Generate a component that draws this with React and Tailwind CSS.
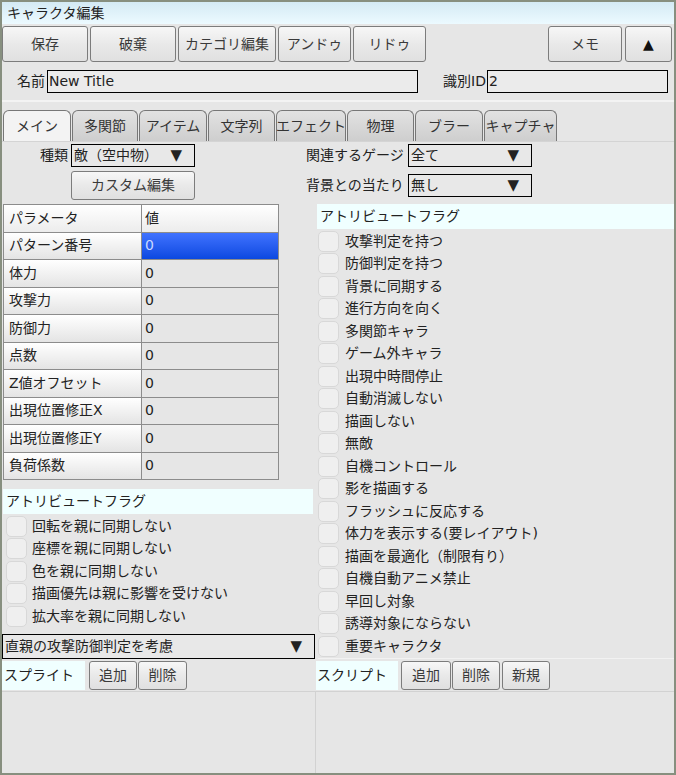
import React from "react";

const params = ["パターン番号", "体力", "攻撃力", "防御力", "点数", "Z値オフセット", "出現位置修正X", "出現位置修正Y", "負荷係数"];

const childFlags = ["回転を親に同期しない", "座標を親に同期しない", "色を親に同期しない", "描画優先は親に影響を受けない", "拡大率を親に同期しない"];

const attrFlags = [
  "攻撃判定を持つ",
  "防御判定を持つ",
  "背景に同期する",
  "進行方向を向く",
  "多関節キャラ",
  "ゲーム外キャラ",
  "出現中時間停止",
  "自動消滅しない",
  "描画しない",
  "無敵",
  "自機コントロール",
  "影を描画する",
  "フラッシュに反応する",
  "体力を表示する(要レイアウト)",
  "描画を最適化（制限有り）",
  "自機自動アニメ禁止",
  "早回し対象",
  "誘導対象にならない",
  "重要キャラクタ",
];

const tabs = [
  { label: "メイン", w: "w-[68px]", active: true },
  { label: "多関節", w: "w-[66px]" },
  { label: "アイテム", w: "w-[68px]" },
  { label: "文字列", w: "w-[67px]" },
  { label: "エフェクト", w: "w-[70px]" },
  { label: "物理", w: "w-[67px]" },
  { label: "ブラー", w: "w-[68px]" },
  { label: "キャプチャ", w: "w-[73px]" },
];

function Btn({ children, className = "" }) {
  return (
    <button
      type="button"
      className={`flex shrink-0 items-center justify-center rounded-[3px] border border-[#7c7c7c] bg-gradient-to-b from-[#f7f7f7] via-[#e9e9e9] to-[#e0e0e0] text-[14px] text-[#3a3a3a] ${className}`}
    >
      {children}
    </button>
  );
}

function Select({ value, className = "" }) {
  return (
    <div className={`flex shrink-0 items-center justify-between border border-black bg-[#e8e8e8] pl-[2px] pr-[12px] text-[14px] ${className}`}>
      <span>{value}</span>
      <span className="text-[15px] leading-none">▼</span>
    </div>
  );
}

function Check({ label, gap = "gap-[5px]" }) {
  return (
    <div className={`flex h-[22.5px] items-center ${gap}`}>
      <div className="h-[21px] w-[21px] shrink-0 rounded-[5px] border border-[#d8d8d8] bg-[#efefef]" />
      <span className="text-[14px] text-[#222]">{label}</span>
    </div>
  );
}

export default function App() {
  return (
    <div className="flex h-[775px] w-[676px] flex-col overflow-hidden border-2 border-[#878f7f] bg-[#e6e6e6] font-['DejaVu_Sans','Noto_Sans_CJK_JP',sans-serif] text-[#222]">
      {/* title */}
      <div className="flex h-[22px] shrink-0 items-center bg-gradient-to-b from-[#d4eaf4] to-[#ecfaff] px-[5px] text-[14px] text-[#222]">
        キャラクタ編集
      </div>

      {/* toolbar */}
      <div className="mt-[2px] flex h-[36px] shrink-0 gap-[2px] pr-[2px]">
        <Btn className="w-[86px]">保存</Btn>
        <Btn className="w-[86px]">破棄</Btn>
        <Btn className="w-[98px]">カテゴリ編集</Btn>
        <Btn className="w-[73px]">アンドゥ</Btn>
        <Btn className="w-[73px]">リドゥ</Btn>
        <div className="flex-1" />
        <Btn className="w-[74px]">メモ</Btn>
        <Btn className="ml-[1px] w-[47px] text-[#111]">▲</Btn>
      </div>

      {/* name row */}
      <div className="mt-[8px] flex h-[23px] shrink-0 items-center text-[14px]">
        <span className="w-[45px] pl-[15px]">名前</span>
        <div className="flex h-full w-[371px] items-center border border-black bg-[#ebebeb] pl-[1px]">New Title</div>
        <span className="ml-[25px] w-[44px]">識別ID</span>
        <div className="flex h-full w-[181px] items-center border border-black bg-[#ebebeb] pl-[1px]">2</div>
      </div>

      <div className="mt-[7px] h-[2px] shrink-0 bg-[#f3f3f3]" />

      {/* tabs */}
      <div className="mt-[9px] flex h-[31px] shrink-0 items-end gap-[1px] border-b border-[#d4d4d4] pl-[1px]">
        {tabs.map((t) => (
          <div
            key={t.label}
            className={`flex h-[31px] shrink-0 items-center justify-center whitespace-nowrap rounded-t-[6px] border border-b-0 border-[#777] text-[14px] text-[#333] ${t.w} ${
              t.active ? "bg-[#f3f3f3]" : "bg-gradient-to-b from-[#e2e2e2] to-[#cecece]"
            }`}
          >
            {t.label}
          </div>
        ))}
      </div>

      {/* kind row */}
      <div className="mt-[2px] flex h-[23px] shrink-0 items-center text-[14px]">
        <span className="w-[66px] text-right">種類</span>
        <Select value="敵（空中物）" className="ml-[3px] h-[23px] w-[124px]" />
        <span className="ml-[111px] w-[98px]">関連するゲージ</span>
        <Select value="全て" className="ml-[4px] h-[23px] w-[124px]" />
      </div>

      <div className="mt-[4px] flex h-[29px] shrink-0 items-center text-[14px]">
        <Btn className="ml-[69px] h-[29px] w-[124px]">カスタム編集</Btn>
        <span className="ml-[111px] w-[98px]">背景との当たり</span>
        <Select value="無し" className="ml-[4px] h-[23px] w-[124px]" />
      </div>

      {/* body */}
      <div className="mt-[4px] flex min-h-0 flex-1">
        {/* left */}
        <div className="flex w-[313px] shrink-0 flex-col">
          <div className="ml-[1px] grid w-[276px] auto-rows-[26.5px] grid-cols-[137px_136px] gap-px border border-[#8c8c8c] bg-[#8c8c8c] text-[14px]">
            <div className="flex items-center bg-gradient-to-b from-white to-[#ececec] pl-[5px]">パラメータ</div>
            <div className="flex items-center bg-gradient-to-b from-white to-[#ececec] pl-[3px]">値</div>
            {params.map((p, i) => (
              <React.Fragment key={p}>
                <div className="flex items-center bg-gradient-to-b from-white to-[#e4e4e4] pl-[5px]">{p}</div>
                <div
                  className={`flex items-center pl-[3px] ${
                    i === 0 ? "bg-gradient-to-b from-[#3f72ff] to-[#0a48e0] text-[#c9d8ff]" : "bg-[#e6e6e6]"
                  }`}
                >
                  0
                </div>
              </React.Fragment>
            ))}
          </div>

          <div className="ml-[1px] mt-[9px] flex h-[25px] w-[310px] items-center bg-[#f0ffff] pl-[3px] text-[14px]">
            アトリビュートフラグ
          </div>
          <div className="ml-[4px] mt-[1px] flex flex-col">
            {childFlags.map((f) => (
              <Check key={f} label={f} />
            ))}
          </div>

          <Select value="直親の攻撃防御判定を考慮" className="mt-[6px] h-[25px] w-[313px] pr-[10px]" />

          <div className="mt-[2px] flex h-[29px] items-center text-[14px]">
            <div className="flex h-full w-[83px] items-center bg-[#f0ffff] pl-[2px]">スプライト</div>
            <Btn className="ml-[4px] h-full w-[48px]">追加</Btn>
            <Btn className="ml-[1px] h-full w-[49px]">削除</Btn>
          </div>
          <div className="mt-[1px] flex-1 border-t border-[#d2d2d2] bg-[#e6e6e6]" />
        </div>

        {/* right */}
        <div className="flex min-w-0 flex-1 flex-col">
          <div className="ml-[2px] flex h-[25px] items-center bg-[#f0ffff] pl-[3px] text-[14px]">アトリビュートフラグ</div>
          <div className="ml-[3px] mt-[1px] flex flex-col border-b border-[#f2f2f2]">
            {attrFlags.map((f) => (
              <Check key={f} label={f} gap="gap-[6px]" />
            ))}
          </div>
          <div className="mt-[2px] flex h-[29px] items-center text-[14px]">
            <div className="ml-[1px] flex h-full w-[82px] items-center bg-[#f0ffff] pl-[1px]">スクリプト</div>
            <Btn className="ml-[3px] h-full w-[50px]">追加</Btn>
            <Btn className="ml-[1px] h-full w-[48px]">削除</Btn>
            <Btn className="ml-[2px] h-full w-[48px]">新規</Btn>
          </div>
          <div className="mt-[1px] flex-1 border-l border-t border-[#d2d2d2] bg-[#e6e6e6]" />
        </div>
      </div>
    </div>
  );
}
